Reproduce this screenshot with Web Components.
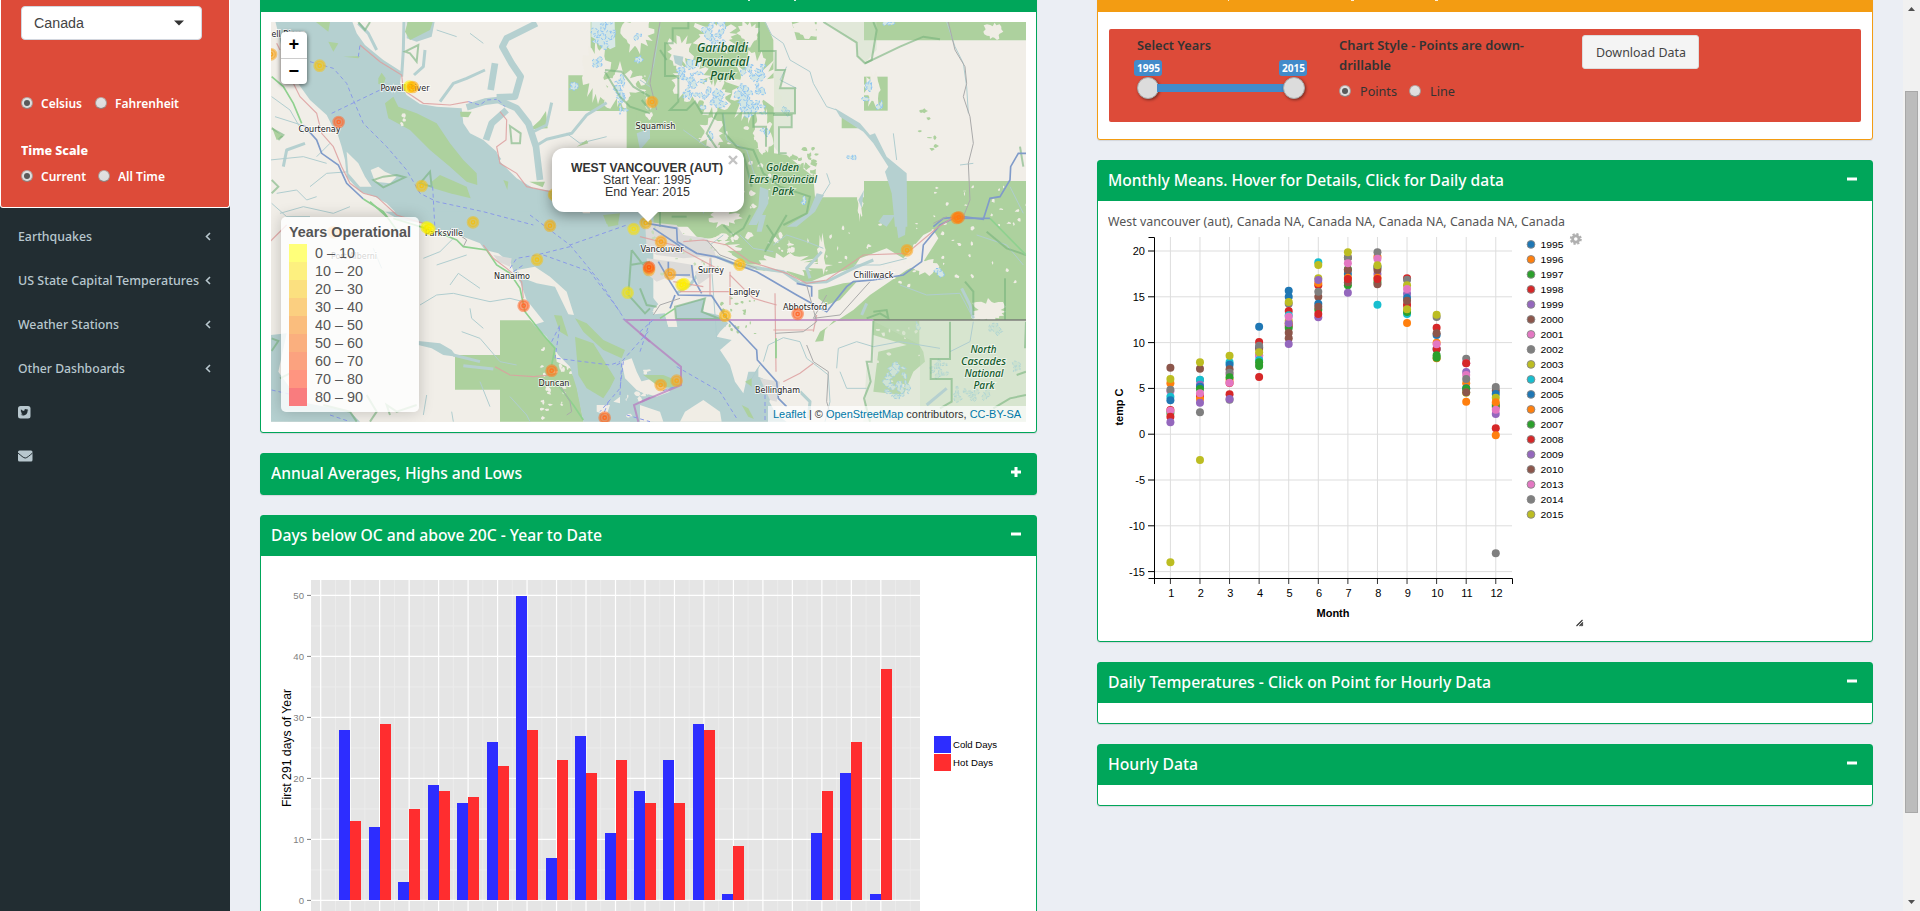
<!DOCTYPE html>
<html lang="en">
<head>
<meta charset="utf-8">
<title>Climate Dashboard</title>
<style>
html,body{margin:0;height:911px;overflow:hidden}
body{display:flex;background:#ecf0f5;background:#ebeef4;font-family:"Noto Sans","Open Sans",sans-serif;font-size:13px;color:#333}
.content{flex:1;display:grid;grid-template-columns:777px 776px;column-gap:60px;padding-left:30px;height:911px;overflow:hidden;align-items:start}
.col{display:flex;flex-direction:column;gap:20px;margin-top:-29px}
</style>
</head>
<body>
<dash-sidebar></dash-sidebar>
<div class="content">
  <div class="col">
    <dash-box tone="#00a65a" specks="486,2 532,2"><station-map></station-map></dash-box>
    <dash-box tone="#00a65a" label="Annual Averages, Highs and Lows" w="251" sign="+" collapsed></dash-box>
    <dash-box tone="#00a65a" label="Days below OC and above 20C - Year to Date" w="331" sign="-"><days-chart></days-chart></dash-box>
  </div>
  <div class="col">
    <dash-box tone="#f39c12" specks="129,1 252,3 336,3"><control-panel></control-panel></dash-box>
    <dash-box tone="#00a65a" label="Monthly Means. Hover for Details, Click for Daily data" w="396" sign="-"><month-chart></month-chart></dash-box>
    <dash-box tone="#00a65a" label="Daily Temperatures - Click on Point for Hourly Data" w="383" sign="-"></dash-box>
    <dash-box tone="#00a65a" label="Hourly Data" w="90" sign="-"></dash-box>
  </div>
</div>
<page-scroll></page-scroll>
<script>
const make=(name,html,after)=>customElements.define(name,class extends HTMLElement{
  connectedCallback(){
    if(this.shadowRoot)return;
    this.attachShadow({mode:'open'}).innerHTML=typeof html==='function'?html(this):html;
    if(after)after(this);
  }
});

/* Text condensed or widened to a given width */
make('fit-text',`<style>:host{display:inline-block;white-space:nowrap}span{display:inline-block;transform-origin:0 50%}</style><span><slot></slot></span>`,el=>{
  const s=el.shadowRoot.querySelector('span'),w=+el.getAttribute('w'),n=s.getBoundingClientRect().width;
  el.style.width=w+'px';
  if(n)s.style.transform='scaleX('+(w/n)+')';
});

make('radio-dot',el=>`<style>:host{display:inline-block;box-sizing:border-box;width:12px;height:12px;border-radius:50%;background:linear-gradient(#e2e2e2,#dcdcdc);border:1px solid #aaa;border-color:#b9aaa6 #a99a96 #8f827e;position:relative;flex:none}
:host([on])::after{content:"";position:absolute;inset:2px;border-radius:50%;background:#5a5a5a}</style>`);

make('side-item',el=>`<style>:host{display:flex;align-items:center;height:44px;padding:0 19px 0 18px;justify-content:space-between;color:#b8c7ce;font-weight:500}svg{display:block}</style><slot></slot>${el.hasAttribute('plain')?'':'<svg width="6" height="9" viewBox="0 0 6 9"><path d="M5 1 1.5 4.5 5 8" fill="none" stroke="#b8c7ce" stroke-width="1.6"/></svg>'}`);

make('dash-sidebar',`<style>
:host{display:block;width:230px;height:911px;background:#222d32;flex:none}
.red{box-sizing:border-box;height:208px;background:#dd4b39;border:1px solid #fff;border-top:0;border-radius:0 0 3px 3px;padding:6px 20px 0;color:#fff;font-weight:600;margin-bottom:6px}
.sel{box-sizing:border-box;width:181px;height:34px;background:#fff;border:1px solid #d2d6de;border-radius:4px;display:flex;align-items:center;justify-content:space-between;padding:0 17px 0 12px;color:#444;font:14px "Liberation Sans",sans-serif}
.r{display:flex;align-items:center;height:20px}
fit-text{font-size:13px}
</style>
<div class="red">
<div class="sel"><fit-text w="50" style="font-size:14px">Canada</fit-text><svg width="10" height="6"><path d="M0 0.5h10L5 5.5z" fill="#333"/></svg></div>
<div class="r" style="margin-top:53px"><radio-dot on></radio-dot><fit-text w="41" style="margin:0 13px 0 8px">Celsius</fit-text><radio-dot></radio-dot><fit-text w="64" style="margin-left:8px">Fahrenheit</fit-text></div>
<div class="r" style="margin-top:27px"><fit-text w="67" style="font-weight:800">Time Scale</fit-text></div>
<div class="r" style="margin-top:6px"><radio-dot on></radio-dot><fit-text w="45" style="margin:0 12px 0 8px">Current</fit-text><radio-dot></radio-dot><fit-text w="47" style="margin-left:8px">All Time</fit-text></div>
</div>
<side-item><fit-text w="74">Earthquakes</fit-text></side-item>
<side-item><fit-text w="181">US State Capital Temperatures</fit-text></side-item>
<side-item><fit-text w="101">Weather Stations</fit-text></side-item>
<side-item><fit-text w="107">Other Dashboards</fit-text></side-item>
<side-item plain><svg width="13" height="13"><rect width="12.5" height="12.5" rx="2.5" fill="#b8c7ce"/><path d="M10.4 3.9c-.4.2-.7.3-1.100.3.4-.2.6-.6.7-1l-1 .4c-1.100-1.200-3.100-.3-2.700 1.400-1.300-.1-2.500-.7-3.300-1.700-.4.8-.2 1.700.5 2.200l-.7-.2c0 .8.5 1.400 1.300 1.600l-.7.1c.2.6.8 1 1.500 1-.7.600-1.600.8-2.400.7 3.400 2.100 7.200-.1 7.100-3.900.3-.3.6-.600.8-.9z" fill="#222d32"/></svg></side-item>
<side-item plain><svg width="15" height="12"><rect y=".5" width="14.500" height="11" rx="1.500" fill="#b8c7ce"/><path d="M0 3C3 5.500 5.500 8 7.250 8S11.500 5.500 14.500 3" fill="none" stroke="#222d32" stroke-width="1"/></svg></side-item>`);

make('dash-box',el=>{
 const c=el.getAttribute('tone'),s=el.getAttribute('sign');
 return `<style>
:host{display:block;box-sizing:border-box;border:1px solid ${c};border-radius:3px;background:#fff;box-shadow:0 1px 1px rgba(0,0,0,.1)}
header{height:40px;background:${c};color:#fff;display:flex;align-items:center;justify-content:space-between;padding:0 15px 0 10px;font-size:17px;font-weight:500}
header fit-text{margin-top:-3px}
section{padding:10px}
header.top{padding:0;align-items:flex-end}
header.top svg{margin:0 0 0 1px}
svg{display:block;margin-top:-4px}
</style>${el.hasAttribute('specks')?`<header class="top"><svg width="770" height="12">${el.getAttribute('specks').split(' ').map(p=>{const[x,w]=p.split(',');return `<rect x="${x}" width="${w}" height="1" fill="#fff" opacity=".85"/>`}).join('')}</svg></header>`
 :`<header><fit-text w="${el.getAttribute('w')}">${el.getAttribute('label')}</fit-text><svg width="10" height="10"><path d="M0 3.500h10v3H0z${s==='+'?'M3.500 0h3v10h-3z':''}" fill="#fff"/></svg></header>`}${el.hasAttribute('collapsed')?'':'<section><slot></slot></section>'}`});

make('page-scroll',`<style>:host{display:flex;flex-direction:column;width:17px;height:911px;background:#f1f1f1;align-items:center}
i{box-sizing:border-box;width:13px;height:722px;background:#bcbcbc;border:1px solid #a8a8a8;margin-top:73px}svg{margin-top:6px}svg+i+svg{margin-top:87px}</style>
<svg width="7" height="12"><path d="M0 5 3.500 1 7 5z" fill="#505050"/></svg><i></i><svg width="7" height="6"><path d="M0 0h7L3.500 4z" fill="#505050"/></svg>`);

make('control-panel',`<style>
:host{display:block;padding:7px 1px 7px 1px;height:93px}
.p{box-sizing:border-box;height:93px;background:#dd4b39;border-radius:2px;display:flex;padding:6px 0 0 28px;color:#333}
.a{width:202px}.b{width:243px}
b{display:block;height:20px;line-height:20px;font-weight:600}
.tags{display:flex;justify-content:space-between;width:173px;margin:5px 0 0 -3px}
.tags span{display:block;background:#428bca;border-radius:3px;color:#fff;height:16px;line-height:16px;font-size:11px;font-weight:700;padding:0 2.500px}
.sl{display:flex;align-items:center;margin-top:1px;width:168px}
.sl i{width:22px;height:22px;border-radius:50%;background:#dcdcdc;box-shadow:1px 1px 3px rgba(0,0,0,.45);border:1px solid #aaa;box-sizing:border-box}
.sl u{flex:1;height:8px;background:#428bca;margin:0 -2px}
.r{display:flex;align-items:center;height:20px;margin-top:6px}
.btn{box-sizing:border-box;width:117px;height:34px;border:1px solid #ddd;border-radius:3px;background:#f4f4f4;display:flex;align-items:center;justify-content:center;color:#444;font-size:13px}
</style><div class="p">
<div class="a"><b><fit-text w="74">Select Years</fit-text></b><div class="tags"><span><fit-text w="23">1995</fit-text></span><span><fit-text w="23">2015</fit-text></span></div><div class="sl"><i></i><u></u><i></i></div></div>
<div class="b"><b><fit-text w="185">Chart Style - Points are down-</fit-text></b><b><fit-text w="52">drillable</fit-text></b><div class="r"><radio-dot on></radio-dot><fit-text w="37" style="margin:0 12px 0 9px">Points</fit-text><radio-dot></radio-dot><fit-text w="25" style="margin-left:9px">Line</fit-text></div></div>
<div class="btn"><fit-text w="90">Download Data</fit-text></div>
</div>`);

/* Bar chart */
make('days-chart',()=>{
 const B=[[28,13],[12,29],[3,15],[19,18],[16,17],[26,22],[50,28],[7,23],[27,21],[11,23],[18,16],[23,16],[29,28],[1,9],0,0,[11,18],[21,26],[1,38]];
 let s='<rect x="311" y="580" width="609" height="360" fill="#e5e5e5"/>';
 const X=i=>320.7+i*29.48,Y=v=>900.4-v*6.1,H=v=>Math.round(900.4-v*6.087);
 for(let v=5;v<50;v+=10)s+=`<path d="M311 ${Y(v)}H920" stroke="#ececec"/>`;
 for(let i=0;i<20;i++)s+=`<path d="M${X(i)+14.74} 580V940" stroke="#ececec"/>`;
 s+=`<path d="M${X(19)+29.48} 580V940" stroke="#ececec"/>`;
 for(let i=0;i<20;i++)s+=`<path d="M${X(i)} 580V940" stroke="#fff" stroke-width="1.200"/>`;
 for(let v=0;v<=50;v+=10)s+=`<path d="M311 ${Y(v)}H920" stroke="#fff" stroke-width="1.200"/><path d="M307 ${Y(v)}h4" stroke="#7f7f7f"/><text x="304" y="${Y(v)+3.500}" text-anchor="end" fill="#7f7f7f" font-size="9.600">${v}</text>`;
 B.forEach((b,i)=>{if(!b)return;const x=Math.round(X(i+1));b.forEach((v,k)=>{s+=`<rect x="${x-11+k*11}" y="${H(v)}" width="11" height="${900-H(v)}" fill="${k?'#ff2d2f':'#2d2dff'}"/>`})});
 s+=`<text transform="translate(291 807) rotate(-90)" font-size="12" fill="#000" textLength="118" lengthAdjust="spacingAndGlyphs">First 291 days of Year</text>
 <rect x="934" y="736" width="17" height="17" fill="#2d2dff"/><rect x="934" y="754" width="17" height="17" fill="#ff2d2f"/>
 <text x="953" y="748" font-size="9.600" textLength="44">Cold Days</text><text x="953" y="766" font-size="9.600" textLength="40">Hot Days</text>`;
 return `<style>:host{display:block}svg{display:block;font-family:"Liberation Sans",sans-serif}</style><svg width="755" height="400" viewBox="271 566 755 400">${s}</svg>`});

/* Scatter of monthly means */
make('month-chart',()=>{
 const C={b:'#1f77b4',o:'#ff7f0e',g:'#2ca02c',r:'#d62728',p:'#9467bd',n:'#8c564b',k:'#e377c2',a:'#7f7f7f',y:'#bcbd22',c:'#17becf'};
 const D=['n503 o550 y537 k574 a569 c590 b601 r630 g639 k632 r650 p667 y1087',
 'n506 y487 a540 c539 p554 b560 g567 r588 o597 k580 p608 a637 y780',
 'c487 y467 b494 n508 k523 a518 o539 g532 r549 k548 r583 a599 p597',
 'b380 r426 b442 n446 a437 p466 k468 c480 k494 g498 g487 y457 r531',
 'b272 b290 a311 y306 r333 c346 o370 y362 r377 g384 p370 k350 n398 n415 p432',
 'c187 y235 y195 r256 o249 p240 n290 a275 b311 g329 n320 p352 r342',
 'n173 a173 y157 g208 b222 n210 k190 g256 n247 o233 r237 p278',
 'o170 a157 k176 b200 a203 p222 n210 y196 g246 n253 o233 r237 c314',
 'r235 a239 y256 p281 k267 b294 k318 r314 n302 c342 g336 y328 o369',
 'a351 y344 r383 b405 n400 b447 o428 r447 k433 o475 g466 g473',
 'a476 k490 r490 p516 k525 o550 a537 b565 g566 y578 n577 o605',
 'n572 a561 b582 y593 n620 g614 o607 p642 k629 r685 o706 a1060'];
 const X=i=>1170.4+(i)*29.58,Y=v=>434.200-v*9.160;
 let s='';
 for(let v=-15;v<=20;v+=5)s+=`<path d="M1155 ${Y(v)}H1512" stroke="#ddd"/><path d="M1148 ${Y(v)}h7" stroke="#000"/><text x="1145" y="${Y(v)+4}" text-anchor="end" font-size="11">${v}</text>`;
 for(let i=0;i<12;i++)s+=`<path d="M${X(i)} 237V578" stroke="#ddd"/><path d="M${X(i)} 578v6" stroke="#333"/><text x="${X(i)+.8}" y="597" text-anchor="middle" font-size="11">${i+1}</text>`;
 s+='<path d="M1148.500 237.500h6V584M1148.500 578.500H1512.500V584" fill="none" stroke="#000"/>';
 D.forEach((r,i)=>r.split(' ').forEach(t=>{s+=`<circle cx="${X(i)}" cy="${200+t.slice(1)/3}" r="4" fill="${C[t[0]]}"/>`}));
 const K=['b','o','g','r','p','n','k','a','y','c'];
 const yrs=[...Array(16)].map((_,i)=>[1995+i,K[i%10]]).concat([[2013,'k'],[2014,'a'],[2015,'y']]);
 yrs.forEach(([t,c],i)=>{const y=244.4+i*15;s+=`<circle cx="1531" cy="${y}" r="3.900" fill="${C[c]}" stroke="#888" stroke-width=".9"/><text x="1540.500" y="${y+3.400}" font-size="9.500" textLength="23" lengthAdjust="spacingAndGlyphs">${t}</text>`});
 s+=`<text x="1333" y="617" text-anchor="middle" font-weight="700" font-size="11" textLength="33">Month</text>
 <text transform="translate(1123 425.500) rotate(-90)" font-weight="700" font-size="11" textLength="37">temp C</text>
 <g transform="translate(1575.800 239)" fill="none" stroke="#b0b0b0"><circle r="3.200" stroke-width="2.800"/><circle r="5" stroke-width="2" stroke-dasharray="2.200 1.727"/></g>
 <path d="M1576.500 626l6-6M1579.500 626l3.500-3.500M1581.500 626l1.500-1.500" stroke="#333" stroke-width="1.100"/>`;
 return `<style>:host{display:block;height:420px;color:#555}svg{display:block;font-family:"Liberation Sans",sans-serif}fit-text{height:20px;line-height:20px;font-size:13px;display:block}</style><fit-text w="457">West vancouver (aut), Canada NA, Canada NA, Canada NA, Canada NA, Canada</fit-text><svg width="480" height="400" viewBox="1108 231 480 400">${s}</svg>`});

/* Map: four tiles, each drawn at triple scale */
make('station-map',()=>{
 const T={a:'250,0',b:'640,0',d:'250,215',e:'640,215'};
 const g=(t,c,...ds)=>`<g transform="translate(${T[t]}) scale(.33333)" class="${c}">${ds.map(d=>`<path d="${d}"/>`).join('')}</g>`;
 let seed=7;const R=()=>(seed=(seed*16807)%2147483647)/2147483647;
 const blobs=(t,cls,list)=>g(t,cls,...list.map(([x,y,rx,ry,n=22])=>{let d='';for(let i=0;i<n;i++){const a=i/n*6.283,k=.5+R()*.65;d+=(i?'L':'M')+(x+Math.cos(a)*rx*k).toFixed(0)+','+(y+Math.sin(a)*ry*k).toFixed(0)}return d+'Z'}));
 const specks=(t,cls,x,y,w,h,n,m)=>blobs(t,cls,[...Array(n)].map(()=>[x+R()*w,y+R()*h,2+R()*m,2+R()*m,7]));
 /* clusters of small glaciers scattered inside an ellipse */
 const ice=(t,list)=>blobs(t,'ice',list.flatMap(([x,y,rx,ry])=>[...Array(Math.max(2,Math.round(rx*ry/120)))].map(()=>{const a=R()*6.283,k=Math.sqrt(R())*.85;return[x+Math.cos(a)*k*rx,y+Math.sin(a)*k*ry,4+R()*11,4+R()*12,10]})));
 let s='<rect x="271" y="22" width="755" height="400" fill="#f1eee8"/>';
 /* forests */
 s+=g('b','green','M-40,60H375L400,120 402,460 440,465 470,490 520,530 525,592H672V543H1158V680H-40Z','M455,66H530V120H470Z','M672,66H1158V121H672Z','M672,230H743V332H672Z','M605,345L655,385H605Z');
 s+=g('a','green','M1022,66H1200V420L1160,400V333H955V226H1022Z','M888,333L893,385 840,388 870,360Z');
 s+=g('e','green','M120,-20H1158V315H700L580,318 555,345 550,378 525,380 540,350 640,285 690,240 800,165 850,140 895,70 880,45 850,60 790,130 740,100 700,115 660,130 640,160 560,180 500,205 440,172 350,165 260,110 230,75 170,65 130,20Z','M535,225L610,205 650,200 600,255 560,270 535,250Z','M700,318H838V390L850,410 855,440 820,470 790,540 700,530 715,410 800,390 700,360Z');
 s+=g('d','green','M750,316H840L880,360 915,400 920,440 970,465 990,560 1000,620H750Z','M615,420H750V524H615Z');
 s+=specks('b','green',410,440,120,110,24,14)+specks('b','land',180,380,220,270,26,9)+specks('b','green',820,330,80,120,8,8)+specks('b','land',830,560,330,100,16,6)+specks('b','land',0,150,40,240,10,14)+specks('e','land',560,20,590,200,44,6)+specks('e','land',180,50,330,80,30,12)+specks('e','green',240,250,120,110,22,6)+specks('e','land',710,330,130,190,16,8)+specks('d','land',870,400,120,210,34,8);
 s+=blobs('b','land',[[230,110,70,60,40],[150,240,60,70,40],[220,290,50,60,40],[340,260,80,110,50],[215,400,40,50,24],[330,100,40,40,24],[370,400,30,70,30],[120,155,40,50,24],[700,270,30,55,24],[1060,95,30,30],[500,90,50,30],[660,610,10,50]]);
 s+=blobs('a','land',[[1040,210,40,100,30],[1110,260,60,70,40],[1165,100,50,60,30]]);
 s+=blobs('e','land',[[1050,290,60,40,30],[860,155,50,25],[430,150,130,35,40],[545,120,14,60],[210,100,90,30,30],[250,10,55,28,26]]);
 s+=ice('b',[[225,95,40,60],[150,240,46,60],[215,300,46,42],[330,270,46,80],[350,215,40,28],[340,325,50,28],[225,412,16,14],[375,385,14,36],[685,280,15,32],[712,322,16,14],[740,72,24,8],[483,600,14,12],[440,335,26,12],[635,468,10,8]]);
 s+=g('a','glac','M1024,66H1094L1096,140 1080,148 1060,130 1040,120 1024,110Z');
 s+=ice('a',[[1060,100,40,48],[1040,195,14,36],[1115,265,24,54],[1160,95,12,24],[1170,175,14,14],[970,265,14,20],[1110,335,22,12]]);
 s+=ice('e',[[770,500,50,56],[895,460,34,32],[1070,345,26,24],[960,540,36,18],[1020,540,36,16],[1130,450,24,16],[885,175,30,12],[835,335,12,8],[985,555,26,14]]);
 s+=g('e','pale','M700,318H1158V620H670L680,450 700,440Z','M700,318H1158V620H840V390Z')+g('b','pale','M550,66H710V150L675,190 652,170 650,128Z','M402,155L407,210 430,210 420,262 466,265V345H455V382H417V460L402,440Z');
 /* sea and lakes */
 s+=g('a','water','M75,60L95,140 130,230 180,300 230,345 245,375 262,400 275,440 285,480 290,530 330,575 375,590 410,610 450,650 520,665 560,690H1210V640L1060,645 1000,625 960,600 900,572 850,565 800,535 770,505 745,480 740,455 700,420 660,400 640,370 635,325 560,320 510,312 470,285 450,250 455,215 400,180 345,135 320,100 305,60Z','M470,60H555L545,110 500,125 470,115Z');
 s+=g('a','inlet','M650,322L705,305 745,300 800,325 835,370 858,440 870,540','M740,292L795,290 812,230 785,190 757,140 770,115 860,70','M735,190L722,270','M770,330L725,370 708,420');
 s+=g('a','lake','M570,305L610,250 650,235 705,210','M462,60L460,150 455,230','M525,150L520,200 492,225','M325,70L355,100 380,150','M850,395L890,375 905,308','M862,435L890,418 965,400 1010,345 1070,308','M100,500L110,450 165,430','M735,460L750,480');
 s+=g('d','water','M405,-10L450,15 520,25 600,50 690,85 705,105 745,115 782,145 792,172 812,205 830,255 882,320 850,330 890,365 925,420 960,455 980,520 1000,620H1210V-10Z','M63,360L110,355 85,470 150,560 300,590 330,620H63Z','M505,378L570,385 605,405 620,425 580,420 545,400 505,390Z');
 s+=g('d','lake','M610,420L690,440M640,452L730,462');
 s+=g('e','water','M-30,-10L20,60 15,140 0,170 20,225 55,268 20,300 75,295 85,335 110,335 105,275 195,248 190,290 235,300 265,325 240,350 230,365 275,375 240,405 270,450 285,500 310,535 325,470 345,470 355,455 355,485 390,500 400,520 388,560 410,600 440,620H-30Z');
 s+=g('b','water','M585,325L660,370 690,405 705,400 740,470 800,520 802,680H765L755,580 735,515 745,500 700,430 670,395 600,350Z','M360,560L385,570 385,610 350,675H325L355,620Z','M530,580L552,585 525,635 470,680H440L505,640Z','M-10,400L30,385 30,415 0,450Z','M655,600L672,570 665,625Z','M100,165L130,170 125,200 105,190Z');
 s+=g('e','water','M-30,20L60,50 130,65 130,78 60,65 0,60Z','M730,0H765L740,35 715,20Z','M765,0H800L795,60 775,70Z','M350,50L360,0H378L365,50Z');
 s+=g('e','lake','M230,125L290,150 360,160 430,170 480,205 560,200 640,160 700,135','M545,110L500,160 510,190','M680,265L665,300','M860,570L920,520','M480,530L510,560 505,610','M110,235L150,210 180,170','M965,220L990,270 1000,310');
 s+=g('e','stream','M780,210L860,240 960,235 1000,310','M370,440L385,390 430,368 480,380 500,430 540,460 565,480 570,560 555,620','M590,460L595,400 650,380 700,395 780,380 900,400','M230,370L210,90 250,60','M330,500L360,450','M930,410L990,380 1000,320','M600,470L620,520 680,520','M400,90L440,60 500,80 550,100','M640,150L720,150 800,130','M300,60L340,100 400,110','M1010,60L1100,90 1150,150');
 s+=g('a','stream','M65,290L120,330 160,400','M75,350L170,380','M60,480L160,470 230,490','M80,580L140,570 170,600 200,590','M90,640L160,620 250,640 300,620','M180,560L230,520 300,515','M65,610L110,650 180,650','M200,470L240,430','M950,400L990,430 1070,410','M660,100L700,130','M560,90L620,110');
 s+=g('d','stream','M510,270L560,240 610,235 720,260 780,250 820,260','M600,210L625,175 690,220','M660,280L665,310 700,340','M635,350L690,370 750,440 800,450','M520,130L570,110 610,70','M530,540L520,600','M605,590L610,620','M690,500L720,575','M370,100L395,160','M780,545L830,600 840,620','M650,120L560,150');
 s+=g('b','stream','M375,66L395,105 430,130 450,180 510,215 520,250 560,320 590,330','M60,80L40,200 20,250','M920,66L945,140 970,190 980,260 985,340','M440,200L420,240 470,265','M250,340L260,420 320,450 345,530','M560,520L570,550 545,590','M130,390L200,440','M190,640L210,560','M1110,560L1150,640','M1000,490L960,495','M30,260L0,240','M760,400L770,480');
 /* islands */
 s+=g('a','land','M290,455L325,490 345,530 365,560 330,560 295,520Z','M362,510L385,500 405,515 440,530 420,550 375,545Z','M985,625H1020V640H1000Z');
 s+=g('a','green','M405,310L430,290 445,320 500,340 560,370 600,430 640,480 680,520 682,555 650,545 600,500 540,450 480,390 415,355Z','M545,545L570,525 650,560 662,595 600,580 550,565Z','M385,235L395,218 407,235 400,255 385,252Z','M235,125L265,130 250,155Z','M280,170L330,168 325,175Z','M475,60H550L540,90 500,110 480,120 465,95Z','M630,335L665,335 655,352 632,350Z','M760,540L775,545 772,570Z','M838,545L885,545 878,562Z','M1060,645L1110,640 1105,665 1070,672Z','M190,60L240,66 235,95Z','M980,440L1010,420 1015,430Z','M370,590L380,600Z','M65,380L100,410 80,420Z');
 s+=g('d','land','M800,165L855,155 900,185 950,230 972,300 955,298 915,215 860,205 820,190Z','M1040,570L1080,570 1070,600 1040,590Z','M1115,440L1145,430 1160,470 1195,540 1160,525 1125,490Z','M1090,560L1110,545 1110,565Z');
 s+=g('d','green','M912,300L935,302 955,365 930,350Z','M975,310L1010,325 1060,375 1125,405 1115,430 1060,405 1000,350Z','M975,365L1030,385 1095,490 1080,520 1060,550 1010,520 985,480Z','M1060,0L1105,0 1105,30 1075,35Z');
 s+=g('e','land','M75,300L105,300 112,336 85,335Z','M0,500L40,490 90,530 50,545 0,530Z','M120,620L135,590 190,555 240,590 245,620Z','M0,570L60,590 70,620H0Z','M35,290L100,258 110,265 105,290Z');
 s+=g('e','green','M10,480L70,480 120,500 100,520 50,510Z','M305,570L325,580 342,612 325,605Z','M315,500L335,490 335,515Z');
 s+=specks('d','land',1120,440,80,170,14,10)+specks('a','land',450,345,20,30,4,7);
 /* built-up areas */
 s+=g('e','town','M15,20L110,30 130,60 200,70 220,100 230,130 180,125 130,130 50,120 20,100Z','M20,130L100,140 160,150 160,190 100,180 50,200 25,180Z','M165,170L210,150 210,185 175,210Z','M360,490L420,500 410,560 390,555Z')+g('d','town','M730,120L785,130 780,155 745,140Z');
 s+=specks('e','pk',15,30,220,150,20,5);
 /* park borders */
 s+=g('b','park','M145,66V85H98V130H75V228H115V305L90,330 140,330 165,305 185,340H465V265H420L435,210H407V153H357V66','M402,340V345H455V382H417V460H440','M550,66L650,128 652,168 675,190 695,180 710,90 700,66','M675,190L780,140 850,110 900,118','M248,340L255,400 290,440 340,450 370,520 420,560 510,590 500,640 430,675','M230,340L200,400 240,460 200,440','M310,460L335,560','M340,345V380H378V440','M5,300L30,330','M60,150L80,180','M0,640L60,620 60,680','M95,650H140','M1140,440L1150,500');
 s+=g('a','park','M465,155L505,135 500,185 480,160Z','M780,378L812,400 810,430 785,430Z','M370,540L400,562 465,532 440,525 400,530Z','M510,550L540,515 545,560Z','M1065,210L1115,215 1150,260 1200,290','M1065,215L1110,290 1140,320 1200,340','M325,66L345,90 360,66','M65,540L85,560 65,580','M65,385L100,405 85,420');
 s+=g('e','park','M700,318L695,440H680L692,500 672,550 690,620','M930,320V432H872V492H935V560L900,580','M1158,320L1155,400','M1158,540L1110,550 1060,580','M250,30L280,60 310,40 330,0','M440,0L375,110 400,60 380,30','M680,310L720,295 745,310 740,285 700,290','M975,200L1000,230 1000,300','M1095,190V315','M1040,50L1100,100 1158,120','M0,220L20,270 50,275','M105,275L195,250 185,290 240,312 108,312Z','M1130,480L1158,470');
 s+=g('d','park','M1145,105L1135,240 1185,295 1200,280M1140,150L1200,140M1145,105L1180,150','M65,370L85,378 65,408','M350,540L380,590 360,620','M420,600L410,570 440,590 500,570','M90,490L130,470','M220,570L300,590 320,620');
 /* roads and rail */
 s+=g('a','rpink','M130,250L150,290 200,340 215,400 250,440 275,500 300,550 340,580 380,590 440,645 520,670','M330,135L390,185 455,225 460,270 520,310 600,315 655,305','M750,335L770,360 768,420 740,440 750,490 800,520 830,560 900,575','M80,130L90,150');
 s+=g('a','rblue','M160,375L200,420 215,460 265,495 290,550 340,597')+g('a','rgreen','M65,230L100,260 130,310 155,370','M340,597L400,635 440,690','M360,605L410,650');
 s+=g('d','rgreen','M430,10L560,50 620,75 640,95 710,105 740,150 780,175 810,220 825,290 880,360 915,400 905,450','M915,500L940,530 970,570 1000,615')+g('d','rpink','M700,90L730,130 770,160 815,200 820,250','M735,455L780,480 850,485 900,480','M110,30L60,80')+g('d','rgray','M930,510L960,560 965,590 950,600','M600,40L650,75 640,95');
 s+=g('e','rblue','M20,25L110,40 112,80 170,115 225,125 350,170 470,240 560,290 620,215 640,200 700,195 790,180 845,140 850,90 900,30 960,0','M55,140L90,200 115,240 215,242 260,310 350,405 352,435 410,500 415,550 440,575','M40,40L115,90 130,105','M155,150L160,190 185,235','M470,205L515,215 515,245','M85,140V180H150','M105,240L90,280','M960,10H1050')+g('b','rblue','M970,650L1030,658 1050,595 1080,590 1110,540 1112,500 1135,460H1158','M880,680L910,655 970,650');
 s+=g('e','rpink','M130,80L190,75 260,90 330,140 440,175 500,205 560,195 670,120 800,115 890,40 950,0','M210,130V240','M270,170V270','M405,235L408,470M270,230H120','M0,65L100,90 230,160','M400,345H520M100,200L190,215','M430,500L480,475 520,445','M270,180L340,250 410,270','M530,300L520,350')+g('e','rgray','M500,210L530,320 490,350 405,355','M560,240L520,310 600,300 690,200','M500,390L520,440 565,470 560,560 575,610','M40,300L60,270 120,250','M200,75L240,120 350,160')+g('e','rgreen','M408,370V430','M60,310L105,280','M1050,10L1158,120');
 s+=g('b','rgray','M60,66L40,180 30,250 50,330','M925,66L945,150 975,200 980,250 970,290 990,350 1000,430 985,490 990,600 970,650','M880,670L920,650');
 s+=g('e','rpurp','M0,315H700','M0,355L123,455V510L0,562')+g('e','rdark','M700,315H1158')+g('d','rpurp','M1200,315H1125L1200,380','M1200,548L1152,570 1165,620');
 s+=g('a','ferry','M180,185L250,205 290,250 310,300 340,370 410,440 470,510 510,580 560,605 700,635 850,675','M245,340L390,270 450,265','M325,170L330,135','M548,560L555,690','M655,305L690,315 710,300 740,298','M745,300L765,320')+g('d','ferry','M840,0L960,90 1130,30','M960,90L1050,200 1125,315','M780,160L800,130 860,120 960,95','M790,170L820,150','M880,120L1020,170 1110,290','M905,380L930,330 915,430','M1195,350L1115,440 1110,540','M920,430L1080,450 1110,440','M1075,560L1060,600','M1130,600L1200,620','M1100,450L1120,440 1110,520 1050,590','M65,525L130,540M240,600L300,620')+g('e','ferry','M0,350L45,310','M110,455L240,530 290,610','M0,410L30,320','M375,540V620','M120,510L60,530');
 /* places */
 const t=(x,y,w,str,cls='')=>`<text x="${x}" y="${y}" textLength="${w}" lengthAdjust="spacingAndGlyphs" class="${cls}">${str}</text>`;
 s+=t(271.500,37,32,'ell River')+t(380.500,90.500,49,'Powell River')+t(298.500,132,42,'Courtenay')+t(635.500,129,40,'Squamish')+t(425,236,38,'Parksville')+t(494,279,36,'Nanaimo')+t(538.500,385.500,31,'Duncan')+t(331,259,46,'Port Alberni')+t(640.500,252,43,'Vancouver')+t(698,273,26,'Surrey')+t(729,295,31,'Langley')+t(783,310,44,'Abbotsford')+t(853.500,278,40,'Chilliwack')+t(755,392.500,45,'Bellingham');
 s+=t(697,52,51,'Garibaldi','pt')+t(695,66,54,'Provincial','pt')+t(710,80,25,'Park','pt')+t(766,170.500,33,'Golden','ps')+t(749,182.500,68,'Ears Provincial','ps')+t(772,194.500,22,'Park','ps')+t(970.500,353,26,'North','ps')+t(961,365,45,'Cascades','ps')+t(964.500,377,39,'National','ps')+t(973.500,389,21,'Park','ps');
 /* stations */
 const M={a:[[63,163,'#f5a623'],[209,197,'#f2c31b'],[478,260,'#fff000'],[488,261,'#fa0'],[266,366,'#ff6a2e'],[515,558,'#f2c31b'],[669,667,'#efc01c'],[900,677,'#efb01c'],[912,584,'#efc01c']],
 b:[[36,306,'#f9a51f'],[950,654,'#ff8a10'],[956,652,'#ff7a10']],
 d:[[250,52,'#f9a030'],[530,37,'#ff0'],[538,42,'#fff000'],[861,134,'#f2c31b'],[821,272,'#ff6a2e'],[905,467,'#ff7a20'],[1064,608,'#ff6a20'],[1151,42,'#f5df1c'],[1133,233,'#ece01c']],
 e:[[17,24,'#f2b61b'],[63,80,'#f9a51f'],[27,165,'#f9a51f'],[27,157,'#ff5a10'],[90,177,'#f9a51f'],[299,149,'#fdbd10'],[125,210,'#f5e01c'],[132,207,'#fff000'],[255,302,'#f7b518'],[473,297,'#ff6a2e'],[801,106,'#f9a51f'],[62,510,'#f5a623'],[110,497,'#f5a623']]};
 for(const k in M)s+=`<g transform="translate(${T[k]}) scale(.33333)">${M[k].map(([x,y,c])=>`<circle cx="${x}" cy="${y}" r="15" fill="${c}" fill-opacity=".6" stroke="${c}" stroke-opacity=".55" stroke-width="8"/><circle cx="${x}" cy="${y}" r="5" fill="none" stroke="${c}" stroke-width="4"/>`).join('')}</g>`;
 const cols=['#ffff7a','#fdf07f','#fbe07f','#fbcf80','#fabd7d','#faaf7e','#fba27f','#ff9580','#f97c7e'];
 return `<style>
:host{display:block;position:relative;width:755px;height:400px;overflow:hidden;color:#333;font-family:"Liberation Sans",sans-serif}
svg{display:block}
path{fill:none}
.green path{fill:#add19e}.land path{fill:#f0ede5}.pk path{fill:#c5ddb8}
.water path{fill:#b5d0d0}.ice path{fill:#d3e6e3;stroke:#8fc4f2;stroke-width:3;stroke-dasharray:8 6}.glac path{fill:#d8e8e6}
.pale path{fill:#c8dfc0;fill-opacity:.38}
.inlet path{stroke:#b5d0d0;stroke-width:20;stroke-linejoin:round}.lake path{stroke:#b5d0d0;stroke-width:9;stroke-linejoin:round}.stream path{stroke:#b0cdcf;stroke-width:3;stroke-linejoin:round}
.town path{fill:#dcdbd9}
.park path{stroke:#77b37b;stroke-opacity:.6;stroke-width:6}
.rpink path{stroke:#dd9f9f;stroke-width:3.500;stroke-opacity:.85}.rblue path{stroke:#809bc9;stroke-width:5}.rgreen path{stroke:#8fd18f;stroke-width:5}.rgray path{stroke:#aaa;stroke-width:3}
.rpurp path{stroke:#b77fc0;stroke-width:6;stroke-opacity:.75}.rdark path{stroke:#777d75;stroke-width:5}
.ferry path{stroke:#8a9ae8;stroke-width:3;stroke-dasharray:12 9}
text{font-family:"DejaVu Sans",sans-serif;font-size:9.500px;fill:#222;stroke:#fff;stroke-opacity:.75;stroke-width:2px;paint-order:stroke}
.pt{font:italic 500 12px "Noto Sans",sans-serif;fill:#125a2c;stroke-opacity:.5}.ps{font:italic 500 10.500px "Noto Sans",sans-serif;fill:#125a2c;stroke-opacity:.5}
.zoom{position:absolute;left:10px;top:10px;width:26px;height:52px;background:#fff;border-radius:4px;box-shadow:0 1px 5px rgba(0,0,0,.65);display:grid;grid-template-rows:26px 26px}
.zoom span{display:grid;place-items:center;font:bold 18px "Liberation Mono",monospace;color:#000}.zoom span+span{border-top:1px solid #ccc;box-sizing:border-box}
.leg{position:absolute;box-sizing:border-box;left:10px;top:195px;width:138px;height:195px;background:rgba(255,255,255,.8);border-radius:5px;box-shadow:0 0 15px rgba(0,0,0,.2);padding:6px 8px;color:#555;font-size:14px}
.leg b{display:block;height:21px;line-height:18px}
.leg div{display:flex;height:18px;line-height:18px;gap:8px}.leg i{width:18px;height:18px}
.pop{position:absolute;box-sizing:border-box;left:281px;top:126px;width:192px;height:64px;background:#fff;border-radius:12px;box-shadow:0 3px 14px rgba(0,0,0,.4);text-align:center;font-size:12px;line-height:12px;padding:13.500px 2px 0 0}
.pop fit-text{display:block;margin:0 auto;text-align:left}
.tip{position:absolute;left:366px;top:189px}
.x{position:absolute;right:6px;top:7px}
.att{position:absolute;right:0;bottom:0;height:16px;line-height:16px;background:rgba(255,255,255,.7);padding:0 5px;font-size:11px}.att a{color:#0078a8}
</style><svg width="755" height="400" viewBox="271 22 755 400">${s}</svg>
<div class="zoom"><span>+</span><span>−</span></div>
<div class="leg"><b><fit-text w="122">Years Operational</fit-text></b>${cols.map((c,i)=>`<div><i style="background:${c}"></i><fit-text w="${i?48:40}">${i*10} – ${i*10+10}</fit-text></div>`).join('')}</div>
<div class="pop"><fit-text w="152"><b>WEST VANCOUVER (AUT)</b></fit-text><fit-text w="88">Start Year: 1995</fit-text><fit-text w="85">End Year: 2015</fit-text><svg class="x" width="10" height="10"><path d="M1 1 9 9M9 1 1 9" stroke="#c3c3c3" stroke-width="2.400"/></svg></div>
<svg class="tip" width="22" height="12"><path d="M0 0H22L11 11z" style="fill:#fff"/></svg>
<div class="att"><fit-text w="248"><a>Leaflet</a> | © <a>OpenStreetMap</a> contributors, <a>CC-BY-SA</a></fit-text></div>`});
</script>
</body>
</html>
